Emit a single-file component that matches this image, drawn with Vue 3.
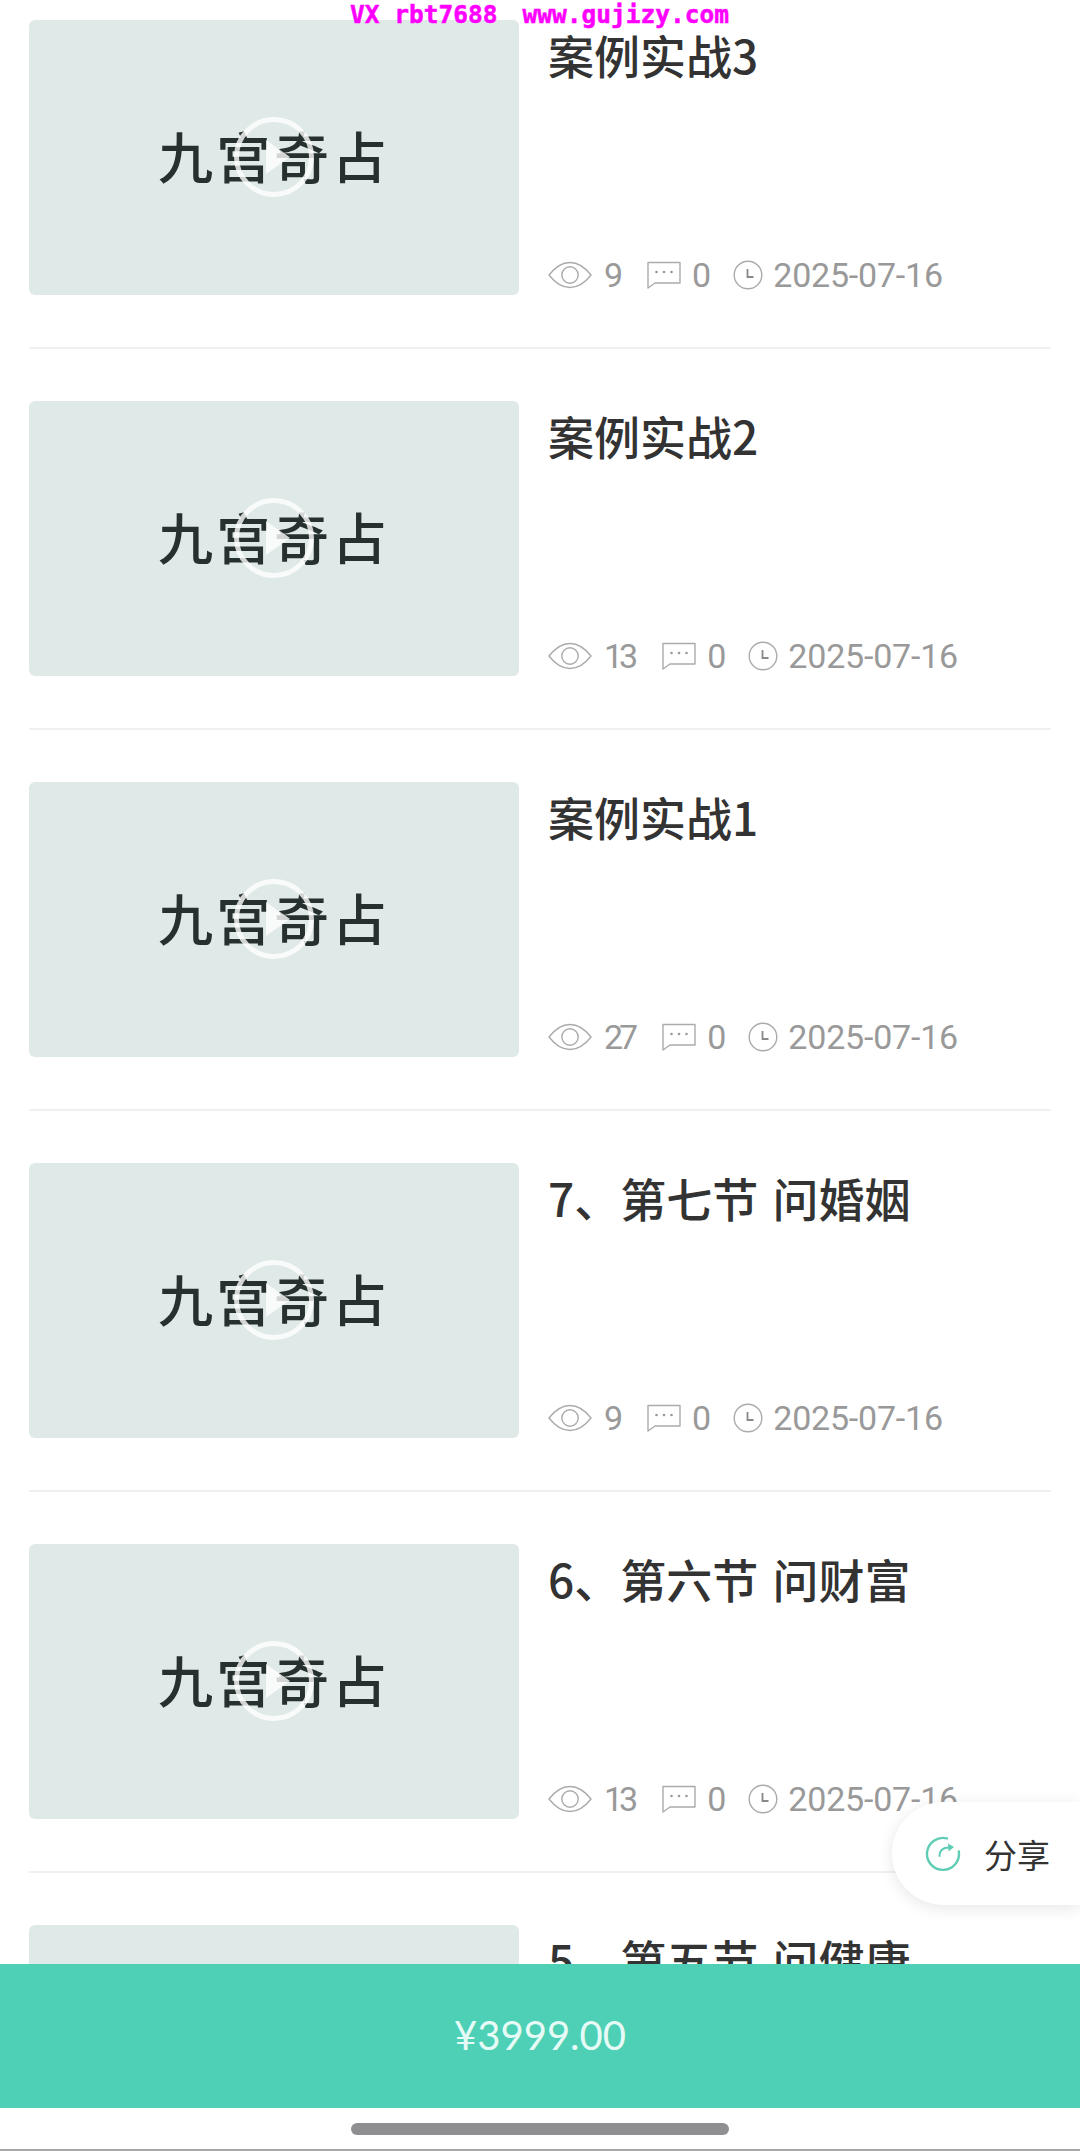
<script setup>
const lessons = [
  { id: 1, title: '案例实战3', views: 9, comments: 0, date: '2025-07-16' },
  { id: 2, title: '案例实战2', views: 13, comments: 0, date: '2025-07-16' },
  { id: 3, title: '案例实战1', views: 27, comments: 0, date: '2025-07-16' },
  { id: 4, title: '7、第七节 问婚姻', views: 9, comments: 0, date: '2025-07-16' },
  { id: 5, title: '6、第六节 问财富', views: 13, comments: 0, date: '2025-07-16' },
  { id: 6, title: '5、第五节 问健康', views: 9, comments: 0, date: '2025-07-16' }
];
</script>

<template>
  <div class="page">
    <div class="watermark">VX rbt7688<span class="mark-gap"></span>www.gujizy.com</div>

    <ul class="list">
      <li v-for="item in lessons" :key="item.id" class="row">
        <div class="thumb">
          <span class="thumb-text">九宫奇占</span>
          <span class="play"><span class="play-arrow"></span></span>
        </div>
        <div class="info">
          <h3 class="title">{{ item.title }}</h3>
          <div class="meta">
            <svg class="icon-eye" viewBox="0 0 44 28" fill="none" stroke="#ababab" stroke-width="1.4">
              <path d="M1 14 C8 5 15 1.5 22 1.5 C29 1.5 36 5 43 14 C36 23 29 26.5 22 26.5 C15 26.5 8 23 1 14 Z" />
              <circle cx="22" cy="14" r="8.2" />
            </svg>
            <span class="num">{{ item.views }}</span>
            <svg class="icon-chat" viewBox="0 0 34 28" fill="none" stroke="#ababab" stroke-width="1.4">
              <path d="M1 1.5 H33 V22 H8 L1 27 Z" stroke-linejoin="round" />
              <circle cx="9.5" cy="11" r="1.3" fill="#999" stroke="none" />
              <circle cx="17" cy="11" r="1.3" fill="#999" stroke="none" />
              <circle cx="24.5" cy="11" r="1.3" fill="#999" stroke="none" />
            </svg>
            <span class="num">{{ item.comments }}</span>
            <svg class="icon-clock" viewBox="0 0 30 30" fill="none" stroke="#ababab" stroke-width="1.4">
              <circle cx="15" cy="15" r="13.8" />
              <path d="M14.5 9 V17 H20.5" stroke="#888" stroke-width="1.8" />
            </svg>
            <span class="date">{{ item.date }}</span>
          </div>
        </div>
      </li>
    </ul>

    <div class="share">
      <svg class="share-icon" viewBox="0 0 36 36" fill="none" stroke="#5fcdb4" stroke-width="2.4" stroke-linecap="round">
        <path d="M22 2.4 A16 16 0 1 0 33.8 15.5" />
        <path d="M14.5 20 C14.5 14.5 18 11.5 24 11.5" stroke-width="2" />
        <path d="M23 7.5 L29 11 L23.5 15.5 Z" fill="#5fcdb4" stroke="none" />
      </svg>
      <span>分享</span>
    </div>

    <div class="buy">¥3999.00</div>
    <div class="home-bar"><span class="home-pill"></span></div>
  </div>
</template>

<style scoped>
.page {
  position: relative;
  display: flex;
  flex-direction: column;
  width: 1080px;
  height: 2151px;
  overflow: hidden;
  background: #fff;
  font-family: "Noto Sans CJK SC", "Noto Sans", sans-serif;
}

.watermark {
  position: absolute;
  top: 0;
  left: 350px;
  z-index: 5;
  color: #ff00ff;
  font-family: "DejaVu Sans Mono", monospace;
  font-size: 24.5px;
  font-weight: 700;
  line-height: 30px;
  white-space: nowrap;
  -webkit-text-stroke: 0.5px #ff00ff;
}

.mark-gap {
  display: inline-block;
  width: 25px;
}

.list {
  flex: 1;
  min-height: 0;
  margin: 0;
  padding: 20px 29px 0;
  overflow: hidden;
  list-style: none;
}

.row {
  display: flex;
  gap: 29px;
  padding-bottom: 52px;
  margin-bottom: 52px;
  border-bottom: 2px solid #f0f0f0;
}

.thumb {
  position: relative;
  display: flex;
  flex: none;
  align-items: center;
  justify-content: center;
  width: 490px;
  height: 275px;
  border-radius: 6px;
  background: #dfe9e7;
}

.thumb-text {
  padding-bottom: 7px;
  color: #26302e;
  font-size: 55px;
  font-weight: 500;
  letter-spacing: 3px;
  line-height: 1;
}

.play {
  position: absolute;
  top: 97px;
  left: 205px;
  display: flex;
  align-items: center;
  justify-content: center;
  box-sizing: border-box;
  width: 80px;
  height: 80px;
  border: 5px solid rgba(255, 255, 255, 0.8);
  border-radius: 50%;
}

.play-arrow {
  width: 0;
  height: 0;
  margin-left: 8px;
  border-top: 17px solid transparent;
  border-bottom: 17px solid transparent;
  border-left: 24px solid rgba(255, 255, 255, 0.8);
}

.info {
  display: flex;
  flex: 1;
  flex-direction: column;
  justify-content: space-between;
  min-width: 0;
}

.title {
  margin: 4px 0 0;
  color: #333;
  font-size: 46px;
  font-weight: 500;
  line-height: 60px;
  word-spacing: 4px;
}

.meta {
  display: flex;
  align-items: center;
  color: #999;
  font-family: Roboto, "Noto Sans", sans-serif;
  font-size: 34px;
  line-height: 40px;
}

.num {
  letter-spacing: -4px;
}

.date {
  letter-spacing: -0.2px;
}

.icon-eye {
  width: 44px;
  height: 28px;
  margin-right: 12px;
}

.icon-chat {
  width: 34px;
  height: 28px;
  margin: 0 11px 0 28px;
}

.icon-clock {
  width: 30px;
  height: 30px;
  margin: 0 10px 0 26px;
}

.share {
  position: absolute;
  top: 1802px;
  right: 0;
  display: flex;
  align-items: center;
  gap: 23px;
  box-sizing: border-box;
  width: 188px;
  height: 103px;
  padding-left: 33px;
  border-radius: 52px 0 0 52px;
  background: #fff;
  box-shadow: 0 3px 16px rgba(0, 0, 0, 0.1);
  color: #333;
  font-size: 33px;
}

.share-icon {
  flex: none;
  width: 36px;
  height: 36px;
}

.buy {
  flex: none;
  position: relative;
  height: 144px;
  background: #4dd0b5;
  color: #e6fbf6;
  font-family: Lato, "Noto Sans", sans-serif;
  font-size: 40px;
  font-weight: 400;
  line-height: 142px;
  text-align: center;
}

.home-bar {
  display: flex;
  flex: none;
  justify-content: center;
  box-sizing: border-box;
  height: 43px;
  padding-top: 15px;
  background: #fff;
  border-bottom: 2px solid #a8a8a8;
}

.home-pill {
  width: 378px;
  height: 12px;
  border-radius: 6px;
  background: #8f8f92;
}
</style>
